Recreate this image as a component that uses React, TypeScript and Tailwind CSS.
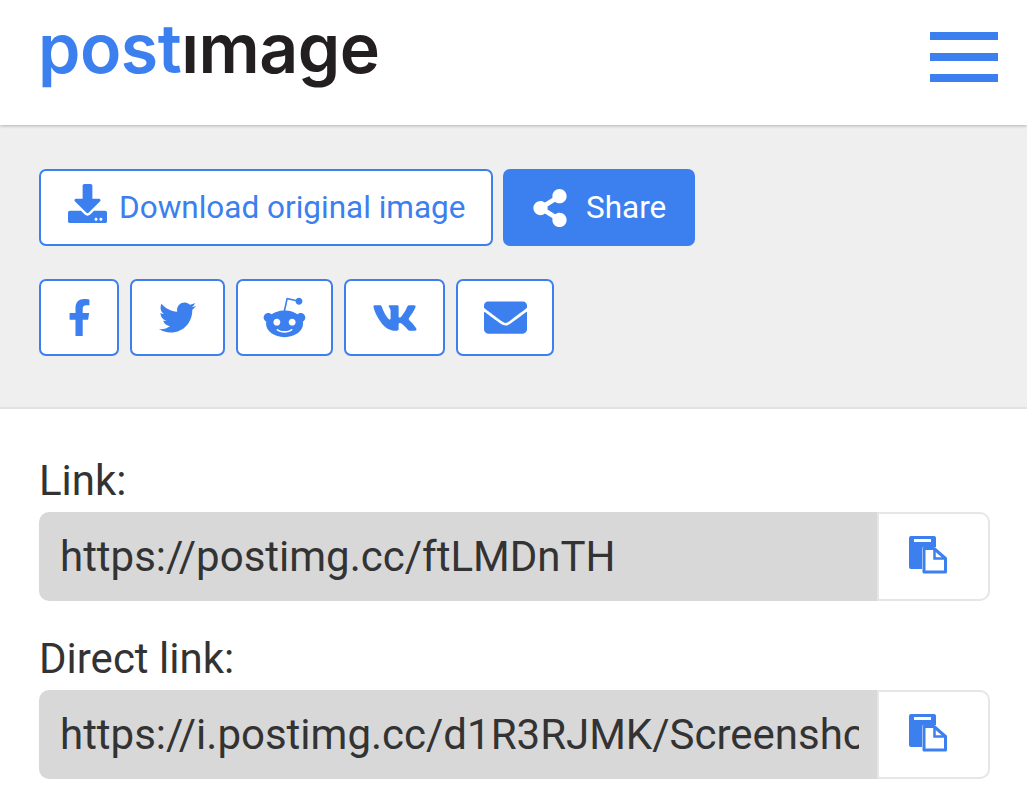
import { FaDownload, FaEnvelope, FaFacebookF, FaRedditAlien, FaShareAlt, FaTwitter, FaVk } from "react-icons/fa"

const socials = [
  { icon: <FaFacebookF className="text-[37px]" />, width: "w-20" },
  { icon: <FaTwitter className="text-[37px]" />, width: "w-[95px]" },
  { icon: <FaRedditAlien className="text-[45px]" />, width: "w-[97px]" },
  { icon: <FaVk className="text-[46px]" />, width: "w-[101px]" },
  { icon: <FaEnvelope className="text-[43px]" />, width: "w-[98px]" },
]

const links = [
  { label: "Link:", value: "https://postimg.cc/ftLMDnTH" },
  { label: "Direct link:", value: "https://i.postimg.cc/d1R3RJMK/Screenshot_20200101.png" },
]

function CopyIcon() {
  return (
    <svg width="38" height="38" viewBox="0 0 38 38" aria-hidden="true" className="mb-1">
      <path
        fill="#3b80ee"
        d="M2 0h23a2 2 0 0 1 2 2v9H15a2 2 0 0 0-2 2v20H2a2 2 0 0 1-2-2V2a2 2 0 0 1 2-2z"
      />
      <rect x="5" y="3" width="17" height="3" fill="#fff" />
      <path
        fill="none"
        stroke="#3b80ee"
        strokeWidth="3"
        strokeLinejoin="round"
        d="M15 12.500h10L36.500 22.500V36H15z"
      />
      <path fill="none" stroke="#3b80ee" strokeWidth="2.500" d="M25.500 13v9.500h10" />
    </svg>
  )
}

export default function App() {
  return (
    <div className="min-h-[800px] bg-white font-['Roboto',sans-serif] text-[#333]">
      <header className="relative z-10 flex h-[125px] items-start justify-between pl-[38px] pr-[29px] shadow-[0_1px_3px_rgba(0,0,0,0.25)]">
        <div className="pt-[8px] font-['Inter',sans-serif] text-[68px] leading-[80px] font-semibold tracking-[-0.5px]">
          <span className="text-[#3b80ee]">post</span>
          <span className="text-[#231f20]">ımage</span>
        </div>
        <button className="flex flex-col gap-[13px] pt-8">
          <span className="block h-2 w-[68px] bg-[#3b80ee]" />
          <span className="block h-2 w-[68px] bg-[#3b80ee]" />
          <span className="block h-2 w-[68px] bg-[#3b80ee]" />
        </button>
      </header>

      <section className="h-[284px] border-b-2 border-[#e2e2e2] bg-[#efefef] pl-[39px] pt-[44px]">
        <div className="flex gap-[10px]">
          <a className="flex h-[77px] w-[454px] items-center gap-[12px] rounded-[7px] border-2 border-[#3b80ee] bg-white pl-[27px] text-[31.5px] text-[#3b80ee]">
            <FaDownload className="mb-2 text-[39px]" />
            Download original image
          </a>
          <a className="flex h-[77px] w-[192px] items-center gap-[17px] rounded-[7px] bg-[#3b80ee] pl-[28px] text-[31.5px] text-white">
            <FaShareAlt className="text-[38px]" />
            Share
          </a>
        </div>
        <div className="mt-[33px] flex gap-[11px]">
          {socials.map((s, i) => (
            <a
              key={i}
              className={`flex h-[77px] items-center justify-center rounded-[7px] border-2 border-[#3b80ee] bg-white text-[#3b80ee] ${s.width}`}
            >
              {s.icon}
            </a>
          ))}
        </div>
      </section>

      <section className="px-[37px] pl-[39px] pt-[47px]">
        {links.map((l) => (
          <div key={l.label} className="mb-[33px]">
            <label className="block h-[56px] text-[42px] leading-[50px]">{l.label}</label>
            <div className="flex h-[89px] w-[951px]">
              <div className="flex w-[838px] items-center overflow-hidden rounded-l-[10px] bg-[#d8d8d8] pl-[21px] pr-[18px] text-[42px] whitespace-nowrap">
                <span className="block overflow-hidden">{l.value}</span>
              </div>
              <button className="flex flex-1 items-center justify-center rounded-r-[10px] border-2 border-[#e6e6e6] bg-white pr-3">
                <CopyIcon />
              </button>
            </div>
          </div>
        ))}
      </section>
    </div>
  )
}
